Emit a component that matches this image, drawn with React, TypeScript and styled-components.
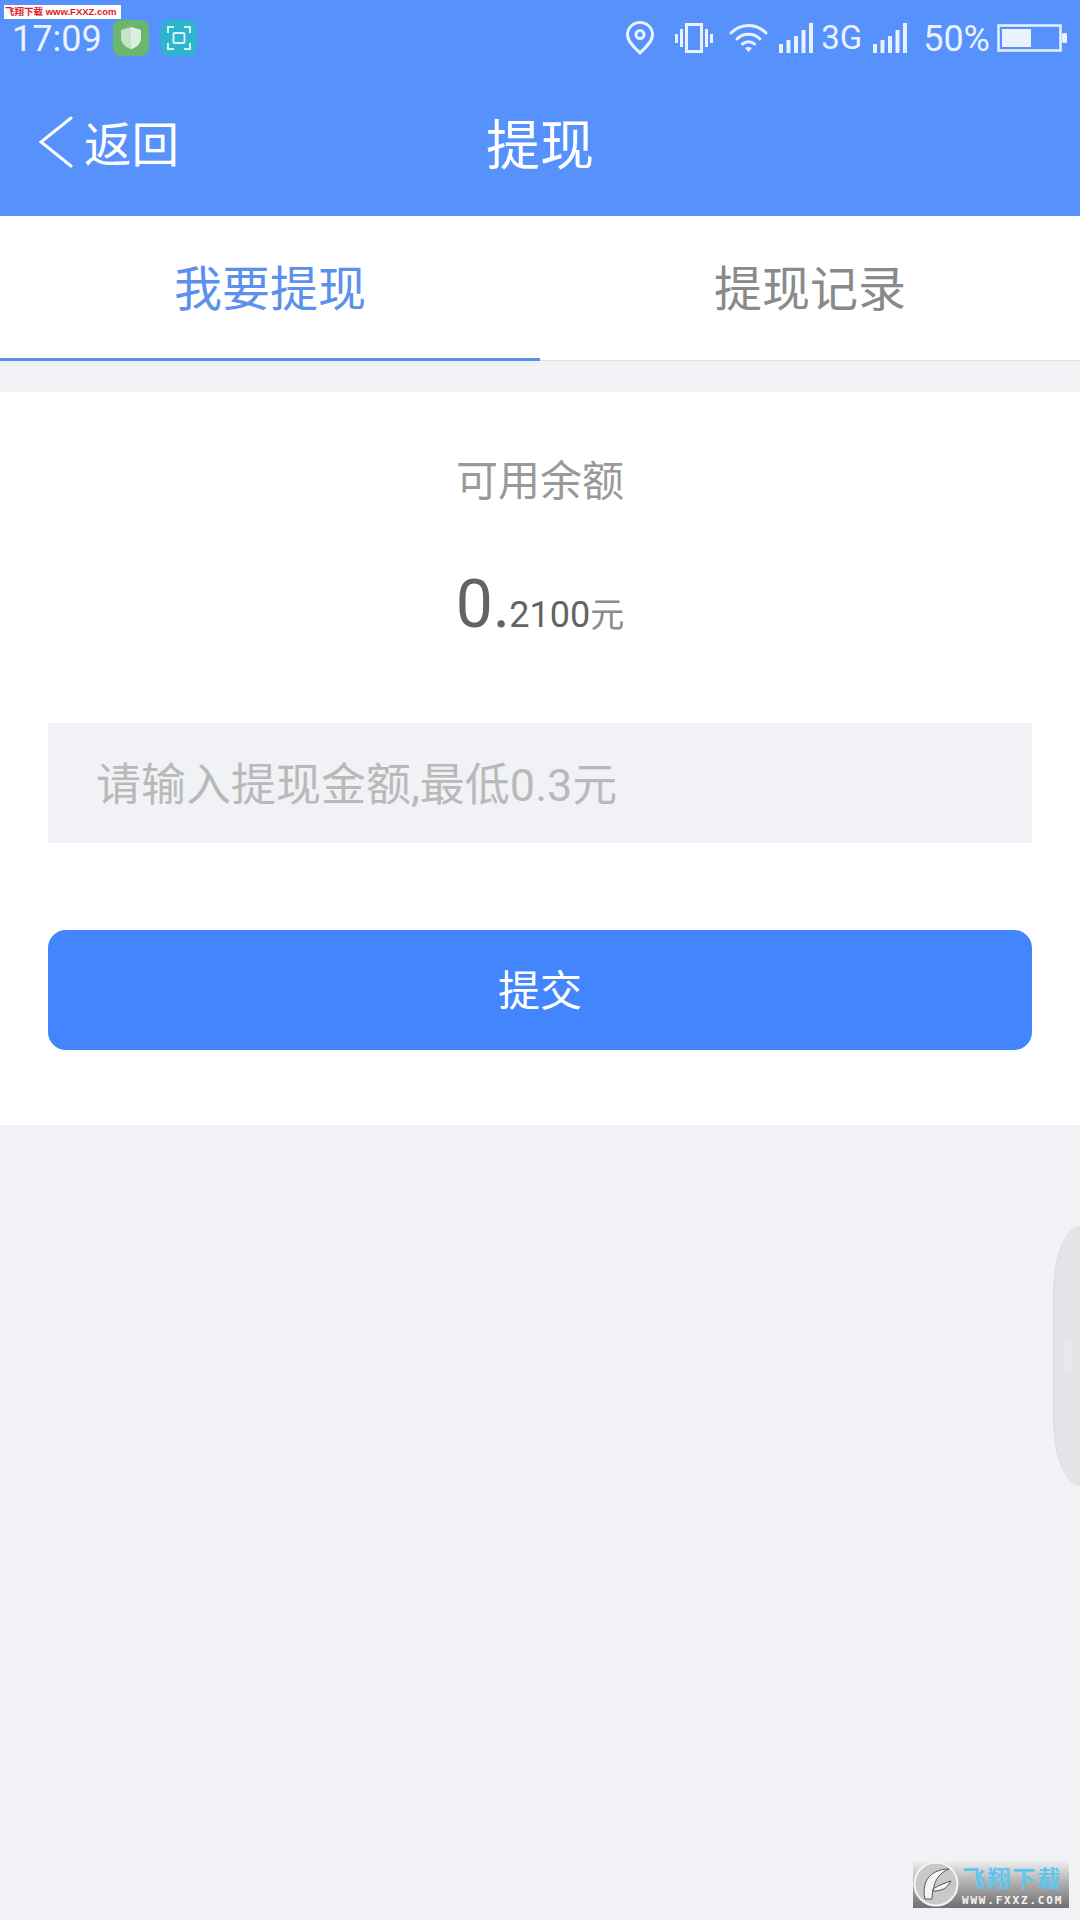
import React from "react";
import styled, { createGlobalStyle } from "styled-components";

const GlobalStyle = createGlobalStyle`
  html, body {
    margin: 0;
    padding: 0;
    background: #f0f2f6;
  }
  body {
    font-family: Roboto, "Noto Sans CJK SC", sans-serif;
  }
`;

const Page = styled.div`
  position: relative;
  width: 1080px;
  height: 1920px;
  overflow: hidden;
  background: #f0f2f6;
`;

const Header = styled.header`
  background: #5791fc;
  color: #fff;
  height: 216px;
  display: flex;
  flex-direction: column;
`;

const StatusBar = styled.div`
  height: 76px;
  padding: 0 13px 0 12px;
  display: flex;
  align-items: center;
  justify-content: space-between;
  color: #eaf2ff;
`;

const StatusGroup = styled.div`
  display: flex;
  align-items: center;
`;

const Time = styled.span`
  font-size: 36px;
  margin: 2px 11px 0 0;
`;

const AppBadge = styled.div<{ $bg: string }>`
  width: 36px;
  height: 36px;
  margin-right: 12px;
  border-radius: 8px;
  background: ${(p) => p.$bg};
  display: flex;
  align-items: center;
  justify-content: center;
`;

const NetLabel = styled.span`
  font-size: 33px;
  margin: 0 11px 1px 8px;
`;

const Percent = styled.span`
  font-size: 36px;
  margin: 2px 7px 0 16px;
`;

const NavBar = styled.div`
  flex: 1;
  position: relative;
  display: flex;
  align-items: center;
  justify-content: center;
  padding-bottom: 9px;
`;

const BackButton = styled.div`
  position: absolute;
  left: 39px;
  top: 39px;
  display: flex;
  align-items: center;
  gap: 11px;
  font-size: 47.5px;
  line-height: 54px;
  font-family: "Noto Sans CJK SC", sans-serif;
`;

const Title = styled.h1`
  margin: 0;
  font-size: 54px;
  font-weight: 400;
  font-family: "Noto Sans CJK SC", sans-serif;
`;

const Tabs = styled.div`
  height: 145px;
  display: flex;
  background: #fff;
  border-bottom: 1px solid #dfe1e5;
  box-sizing: border-box;
`;

const Tab = styled.div<{ $active?: boolean }>`
  flex: 1;
  display: flex;
  align-items: center;
  justify-content: center;
  padding-bottom: 5px;
  font-size: 48px;
  font-family: "Noto Sans CJK SC", sans-serif;
  color: ${(p) => (p.$active ? "#5b90ec" : "#8a8a8a")};
  border-bottom: 3px solid ${(p) => (p.$active ? "#5b90ec" : "transparent")};
  margin-bottom: -1px;
`;

const Card = styled.section`
  margin-top: 31px;
  height: 733px;
  background: #fff;
  padding: 0 48px;
  box-sizing: border-box;
  display: flex;
  flex-direction: column;
  align-items: center;
`;

const BalanceLabel = styled.div`
  margin-top: 58px;
  font-size: 42px;
  line-height: 56px;
  color: #999;
  font-family: "Noto Sans CJK SC", sans-serif;
`;

const BalanceRow = styled.div`
  margin-top: 60px;
  height: 90px;
  display: flex;
  align-items: baseline;
  color: #636363;
`;

const BalanceWhole = styled.span`
  font-size: 66px;
`;

const BalanceFraction = styled.span`
  font-size: 36px;
  margin-left: -1px;
`;

const BalanceUnit = styled.span`
  font-size: 34px;
  color: #8c8c8c;
  font-family: "Noto Sans CJK SC", sans-serif;
`;

const AmountField = styled.div`
  margin-top: 67px;
  width: 100%;
  height: 120px;
  padding: 0 0 4px 48px;
  box-sizing: border-box;
  background: #f0f2f6;
  display: flex;
  align-items: center;
  font-size: 45px;
  color: #b9b9b9;
`;

const SubmitButton = styled.div`
  margin-top: 87px;
  width: 100%;
  height: 120px;
  padding-bottom: 6px;
  box-sizing: border-box;
  border-radius: 18px;
  background: #4285fd;
  color: #fff;
  display: flex;
  align-items: center;
  justify-content: center;
  font-size: 42px;
  font-family: "Noto Sans CJK SC", sans-serif;
`;

const SideHandle = styled.div`
  position: absolute;
  right: 0;
  top: 1226px;
  width: 27px;
  height: 260px;
  background: #e4e5e9;
  border-left: 2px solid #dfe0e4;
  box-sizing: border-box;
  border-radius: 27px 0 0 27px / 68px 0 0 68px;
  display: flex;
  align-items: center;
  padding-left: 9px;
`;

const HandleGrip = styled.div`
  width: 8px;
  height: 30px;
  background: #e9eaed;
`;

const TopWatermark = styled.div`
  position: absolute;
  left: 4px;
  top: 5px;
  width: 117px;
  height: 14px;
  background: #fff;
  color: #e0201c;
  font-size: 9.5px;
  font-weight: 700;
  line-height: 14px;
  padding-left: 1px;
  box-sizing: border-box;
  white-space: nowrap;
  font-family: "Liberation Sans", "Noto Sans CJK SC", sans-serif;
`;

const CornerWatermark = styled.div`
  position: absolute;
  left: 913px;
  top: 1860px;
  width: 156px;
  height: 48px;
  background: linear-gradient(#f2f2f2, #b9b9b9 40%, #6f6f6f);
  display: flex;
  align-items: center;
`;

const MarkText = styled.div`
  margin-left: 3px;
  display: flex;
  flex-direction: column;
  align-items: center;
`;

const MarkName = styled.span`
  font-size: 23px;
  line-height: 34px;
  letter-spacing: 2px;
  font-weight: 700;
  color: #5cc6f0;
  font-family: "Noto Sans CJK SC", sans-serif;
`;

const MarkUrl = styled.span`
  font-size: 11px;
  line-height: 14px;
  font-weight: 700;
  letter-spacing: 1.800px;
  color: #f4f4f4;
  font-family: "DejaVu Sans Mono", monospace;
`;

const PinIcon = () => (
  <svg width="30" height="34" viewBox="0 0 30 34" fill="none" stroke="#eaf2ff" strokeWidth="3" style={{ marginRight: 20 }}>
    <path d="M15 32 C10 27 2.5 21 2.5 13.5 A12.5 12 0 0 1 27.5 13.5 C27.5 21 20 27 15 32 Z" />
    <circle cx="15" cy="13.5" r="4" />
  </svg>
);

const VibrateIcon = () => (
  <svg width="38" height="30" viewBox="0 0 38 30" fill="#eaf2ff" style={{ marginRight: 16 }}>
    <rect x="11.5" y="1.5" width="15" height="27" fill="none" stroke="#eaf2ff" strokeWidth="3" />
    <rect x="0" y="11" width="3" height="9" />
    <rect x="5" y="6" width="3" height="18" />
    <rect x="30" y="6" width="3" height="18" />
    <rect x="35" y="11" width="3" height="9" />
  </svg>
);

const WifiIcon = () => (
  <svg width="39" height="30" viewBox="0 0 39 30" fill="none" stroke="#eaf2ff" strokeWidth="3" strokeLinecap="round" style={{ marginRight: 11 }}>
    <path d="M2 10 C12 0 27 0 37 10" />
    <path d="M8 16 C14 9.500 25 9.500 31 16" />
    <path d="M13.500 21 C17 18 22 18 25.500 21" />
    <path d="M16 25 L19.500 29 L23 25 C21 23.500 18 23.500 16 25 Z" fill="#eaf2ff" stroke="none" />
  </svg>
);

const SignalIcon = () => (
  <svg width="34" height="30" viewBox="0 0 34 30" fill="#eaf2ff">
    <rect x="0" y="21" width="4" height="9" />
    <rect x="7.500" y="17" width="4" height="13" />
    <rect x="15" y="13" width="4" height="17" />
    <rect x="22.500" y="7" width="4" height="23" />
    <rect x="30" y="0" width="4" height="30" />
  </svg>
);

const BatteryIcon = () => (
  <svg width="70" height="28" viewBox="0 0 70 28" fill="#eaf2ff">
    <rect x="1.500" y="1.500" width="62" height="25" fill="none" stroke="#eaf2ff" strokeWidth="2.500" />
    <rect x="5" y="5" width="29" height="18" />
    <rect x="65" y="9" width="5" height="10" rx="1.500" />
  </svg>
);

const ShieldIcon = () => (
  <svg width="22" height="24" viewBox="0 0 22 24">
    <path d="M11 1 L21 4 V12 C21 18 15 22 11 23 C7 22 1 18 1 12 V4 Z" fill="#c5e3c6" />
    <path d="M11 1 L21 4 V12 C21 18 15 22 11 23 Z" fill="#dcefdc" />
  </svg>
);

const ScanIcon = () => (
  <svg width="24" height="24" viewBox="0 0 24 24" fill="none" stroke="#d6f3f6" strokeWidth="2">
    <path d="M1 7 V1 H7 M17 1 H23 V7 M23 17 V23 H17 M7 23 H1 V17" />
    <rect x="6.500" y="7" width="11" height="10" rx="1.500" />
  </svg>
);

const BackIcon = () => (
  <svg width="34" height="52" viewBox="0 0 34 52" fill="none" stroke="#fff" strokeWidth="3" strokeLinecap="round">
    <path d="M32 2 L2 26 L32 50" />
  </svg>
);

const MarkLogo = () => (
  <svg width="46" height="46" viewBox="0 0 46 46" fill="none">
    <circle cx="23" cy="23" r="21.500" fill="#c9c9c9" stroke="#f5f5f5" strokeWidth="2" />
    <path d="M12 38 C8 20 18 8 36 8 C26 12 20 20 19 38 Z" fill="#f5f5f5" stroke="#555" strokeWidth="1" />
    <path d="M20 28 C26 24 32 22 38 20 C34 28 28 30 20 30 Z" fill="#f5f5f5" stroke="#555" strokeWidth="1" />
  </svg>
);

const App: React.FC = () => {
  return (
    <Page>
      <GlobalStyle />
      <Header>
        <StatusBar>
          <StatusGroup>
            <Time>17:09</Time>
            <AppBadge $bg="#6bb56c">
              <ShieldIcon />
            </AppBadge>
            <AppBadge $bg="#2cb5cd">
              <ScanIcon />
            </AppBadge>
          </StatusGroup>
          <StatusGroup>
            <PinIcon />
            <VibrateIcon />
            <WifiIcon />
            <SignalIcon />
            <NetLabel>3G</NetLabel>
            <SignalIcon />
            <Percent>50%</Percent>
            <BatteryIcon />
          </StatusGroup>
        </StatusBar>
        <NavBar>
          <BackButton>
            <BackIcon />
            返回
          </BackButton>
          <Title>提现</Title>
        </NavBar>
      </Header>
      <Tabs>
        <Tab $active>我要提现</Tab>
        <Tab>提现记录</Tab>
      </Tabs>
      <Card>
        <BalanceLabel>可用余额</BalanceLabel>
        <BalanceRow>
          <BalanceWhole>0.</BalanceWhole>
          <BalanceFraction>2100</BalanceFraction>
          <BalanceUnit>元</BalanceUnit>
        </BalanceRow>
        <AmountField>请输入提现金额,最低0.3元</AmountField>
        <SubmitButton>提交</SubmitButton>
      </Card>
      <SideHandle>
        <HandleGrip />
      </SideHandle>
      <TopWatermark>飞翔下载 www.FXXZ.com</TopWatermark>
      <CornerWatermark>
        <MarkLogo />
        <MarkText>
          <MarkName>飞翔下载</MarkName>
          <MarkUrl>WWW.FXXZ.COM</MarkUrl>
        </MarkText>
      </CornerWatermark>
    </Page>
  );
};

export default App;
